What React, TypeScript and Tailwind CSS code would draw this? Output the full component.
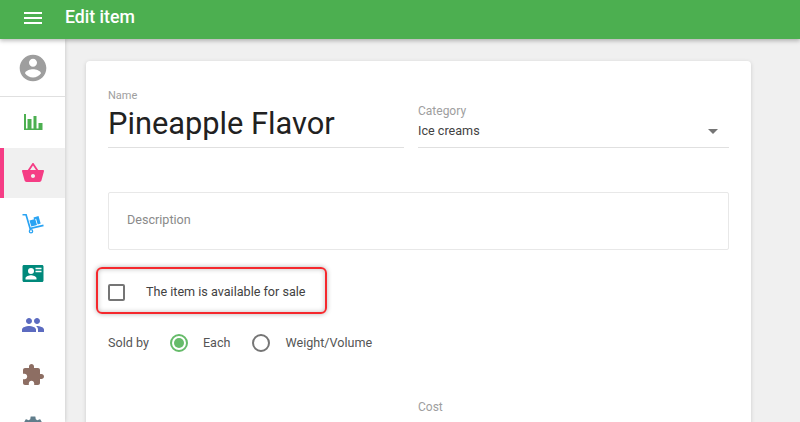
const navItems = [
    { color: "#4caf50", d: "M3 4h2v14.5h1.5V9h4v9.5h2V6h3v12.5h2V13h4v5.5V20H3z" },
    { color: "#f53d85", active: true, d: "M17.21 9l-4.38-6.56c-.19-.28-.51-.42-.83-.42-.32 0-.64.14-.83.43L6.79 9H2c-.55 0-1 .45-1 1 0 .09.01.18.04.27l2.54 9.27c.23.84 1 1.46 1.92 1.46h13c.92 0 1.69-.62 1.93-1.46l2.54-9.27L23 10c0-.55-.45-1-1-1h-4.79zM9 9l3-4.4L15 9H9zm3 8c-1.1 0-2-.9-2-2s.9-2 2-2 2 .9 2 2-.9 2-2 2z" },
    { color: "#29a3f3", d: "M1.5 3h4.2l4 13.6 12.6-3 .4 1.6-14.2 3.4L4.4 4.6H1.5zM8.500 9.500l5.700-1.500 1.800 6-5.700 1.500zM12.500 6.500l5-1.400 2.200 7.500-3 .8-1.600-5.600-2.100.5zM10 18a2.300 2.300 0 1 1 0 4.600 2.300 2.300 0 0 1 0-4.600zm0 1.300a1 1 0 1 0 0 2 1 1 0 0 0 0-2z" },
    { color: "#00897b", d: "M3 3h18c.9 0 1.5.7 1.5 1.5v14c0 .8-.6 1.5-1.5 1.5H3c-.9 0-1.5-.7-1.5-1.5v-14C1.500 3.700 2.100 3 3 3zm7 3a3 3 0 1 0 0 6 3 3 0 0 0 0-6zM4.500 17.500h11v-1.300c0-1.900-3.700-2.900-5.500-2.900s-5.500 1-5.500 2.900zM14.500 5.800v1.400h6V5.800zm0 3v1.400h6V8.800z" },
    { color: "#5c6bc0", d: "M16 11c1.66 0 2.99-1.34 2.99-3S17.66 5 16 5c-1.66 0-3 1.34-3 3s1.34 3 3 3zm-8 0c1.66 0 2.99-1.34 2.99-3S9.66 5 8 5C6.34 5 5 6.34 5 8s1.34 3 3 3zm0 2c-2.33 0-7 1.17-7 3.5V19h14v-2.5c0-2.33-4.67-3.5-7-3.5zm8 0c-.29 0-.62.02-.97.05 1.16.84 1.97 1.97 1.97 3.45V19h6v-2.5c0-2.33-4.67-3.5-7-3.5z" },
    { color: "#8d6e63", d: "M20.5 11H19V7c0-1.1-.9-2-2-2h-4V3.5C13 2.12 11.88 1 10.5 1S8 2.12 8 3.5V5H4c-1.1 0-1.99.9-1.99 2v3.8H3.5c1.49 0 2.7 1.21 2.7 2.7s-1.21 2.7-2.7 2.7H2V20c0 1.1.9 2 2 2h3.8v-1.5c0-1.49 1.21-2.7 2.7-2.7 1.49 0 2.7 1.21 2.7 2.7V22H17c1.1 0 2-.9 2-2v-4h1.5c1.38 0 2.5-1.12 2.5-2.5S21.88 11 20.5 11z" },
    { color: "#607d8b", d: "M19.14 12.94c.04-.3.06-.61.06-.94 0-.32-.02-.64-.07-.94l2.03-1.58c.18-.14.23-.41.12-.61l-1.92-3.32c-.12-.22-.37-.29-.59-.22l-2.39.96c-.5-.38-1.03-.7-1.62-.94l-.36-2.54c-.04-.24-.24-.41-.48-.41h-3.84c-.24 0-.43.17-.47.41l-.36 2.54c-.59.24-1.13.57-1.62.94l-2.39-.96c-.22-.08-.47 0-.59.22L2.74 8.87c-.12.21-.08.47.12.61l2.03 1.58c-.05.3-.09.63-.09.94s.02.64.07.94l-2.03 1.58c-.18.14-.23.41-.12.61l1.92 3.32c.12.22.37.29.59.22l2.39-.96c.5.38 1.03.7 1.62.94l.36 2.54c.05.24.24.41.48.41h3.84c.24 0 .44-.17.47-.41l.36-2.54c.59-.24 1.13-.56 1.62-.94l2.39.96c.22.08.47 0 .59-.22l1.92-3.32c.12-.22.07-.47-.12-.61l-2.01-1.58zM12 15.6c-1.98 0-3.6-1.62-3.6-3.6s1.62-3.6 3.6-3.6 3.6 1.62 3.6 3.6-1.62 3.6-3.6 3.6z" },
];

function Icon({ d, color, size = 24 }: { d: string; color: string; size?: number }) {
    return (
        <svg width={size} height={size} viewBox="0 0 24 24" fill={color}>
            <path d={d} />
        </svg>
    );
}

export default function App() {
    return (
        <div className="relative flex flex-col h-[422px] w-[800px] overflow-hidden bg-[#f0f0f0] font-['Roboto',sans-serif]">
            {/* Top bar */}
            <header className="z-20 flex h-[39px] shrink-0 items-center bg-[#4caf50] pb-[4px] pl-[21px] text-white shadow-[0_2px_4px_rgba(0,0,0,0.25)]">
                <Icon color="#ffffff" d="M3 18h18v-2H3v2zm0-5h18v-2H3v2zm0-7v2h18V6H3z" />
                <h1 className="ml-[20px] text-[17.7px] font-medium leading-none">Edit item</h1>
            </header>

            <div className="flex flex-1 min-h-0">
                {/* Sidebar */}
                <aside className="z-10 flex w-[65px] shrink-0 flex-col bg-white shadow-[0_0_4px_rgba(0,0,0,0.2)]">
                    <div className="flex h-[58px] shrink-0 items-center justify-center border-b border-[#e0e0e0]">
                        <Icon size={32} color="#9e9e9e" d="M12 2C6.48 2 2 6.48 2 12s4.48 10 10 10 10-4.48 10-10S17.52 2 12 2zm0 3c1.66 0 3 1.34 3 3s-1.34 3-3 3-3-1.34-3-3 1.34-3 3-3zm0 14.2c-2.5 0-4.71-1.28-6-3.22.03-1.99 4-3.08 6-3.08 1.99 0 5.97 1.09 6 3.08-1.29 1.94-3.5 3.22-6 3.22z" />
                    </div>
                    {navItems.map((item) => (
                        <div
                            key={item.color}
                            className={`flex h-[50.6px] shrink-0 items-center justify-center ${item.active ? "border-l-[4px] border-[#f53d85] bg-[#f0f0f0] pr-[4px]" : ""}`}
                        >
                            <Icon d={item.d} color={item.color} />
                        </div>
                    ))}
                </aside>

                {/* Form card */}
                <main className="flex-1 min-w-0 pl-[21px] pr-[49px] pt-[22px]">
                    <div className="h-[500px] rounded-[4px] bg-white px-[22px] pt-[28px] shadow-[0_1px_4px_rgba(0,0,0,0.15)]">
                        <div className="flex items-end gap-[14px]">
                            <div className="w-[296px] border-b border-[#e0e0e0] pb-[2px]">
                                <div className="text-[11px] leading-[14px] text-[#9e9e9e]">Name</div>
                                <div className="text-[30.8px] leading-[42px] text-[#212121]">Pineapple Flavor</div>
                            </div>
                            <div className="flex-1 border-b border-[#e0e0e0] pb-[8px]">
                                <div className="text-[12px] leading-[14px] text-[#9e9e9e]">Category</div>
                                <div className="mt-[5px] flex items-center justify-between pr-[11px]">
                                    <span className="text-[12.6px] leading-[16px] text-[#424242]">Ice creams</span>
                                    <span className="h-0 w-0 border-x-[5.500px] border-t-[5px] border-x-transparent border-t-[#757575]" />
                                </div>
                            </div>
                        </div>

                        <div className="mt-[44px] flex h-[58px] items-center rounded-[2px] border border-[#e8e8e8] pb-[2px] pl-[18px] text-[12.6px] text-[#8a8a8a]">
                            Description
                        </div>

                        {/* Highlighted checkbox row */}
                        <div className="ml-[-12px] mt-[17px] flex h-[47px] w-[231px] items-center rounded-[6px] border-2 border-[#f5282d] pl-[10px] pt-[3px] shadow-[0_0_5px_rgba(0,0,0,0.3),inset_0_0_5px_rgba(0,0,0,0.25)]">
                            <span className="h-[17px] w-[17px] rounded-[2px] border-2 border-[#757575]" />
                            <span className="ml-[21px] text-[12.6px] text-[#424242]">The item is available for sale</span>
                        </div>

                        <div className="mt-[20px] flex items-center text-[12.6px] text-[#555555]">
                            <span>Sold by</span>
                            <span className="ml-[21px] flex h-[18px] w-[18px] items-center justify-center rounded-full border-2 border-[#66bb6a]">
                                <span className="h-[10px] w-[10px] rounded-full bg-[#66bb6a]" />
                            </span>
                            <span className="ml-[15px]">Each</span>
                            <span className="ml-[22px] h-[18px] w-[18px] rounded-full border-2 border-[#757575]" />
                            <span className="ml-[15px]">Weight/Volume</span>
                        </div>

                        <div className="ml-[310px] mt-[47px] text-[12px] leading-[14px] text-[#9e9e9e]">Cost</div>
                    </div>
                </main>
            </div>
        </div>
    );
}
